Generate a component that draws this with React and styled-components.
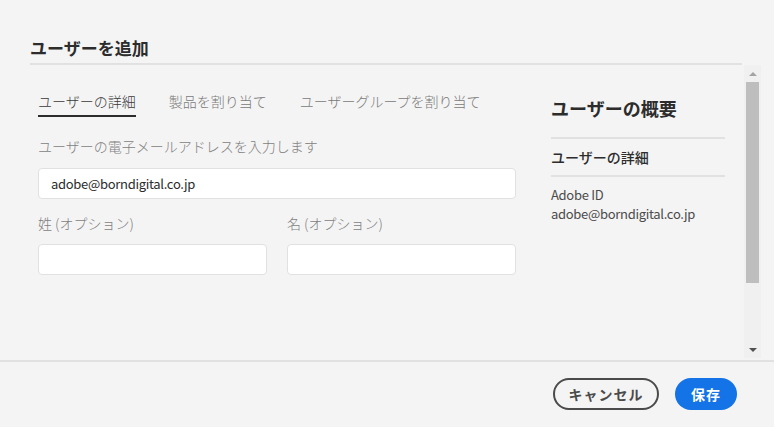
import React from "react";
import styled, { createGlobalStyle } from "styled-components";

const GlobalStyle = createGlobalStyle`
  body {
    margin: 0;
    background: #f4f4f4;
    font-family: "Noto Sans CJK JP", "Noto Sans", sans-serif;
  }
`;

const Page = styled.div`
  width: 774px;
  height: 427px;
  display: flex;
  flex-direction: column;
  background: #f4f4f4;
  overflow: hidden;
`;

const Header = styled.div`
  padding: 36px 32px 0 30px;
`;

const Title = styled.h1`
  margin: 0;
  padding-bottom: 3px;
  font-size: 17px;
  line-height: 24px;
  font-weight: 700;
  color: #2c2c2c;
  border-bottom: 2px solid #e1e1e1;
`;

const Body = styled.div`
  display: flex;
  height: 295px;
`;

const Content = styled.div`
  flex: 1;
  display: flex;
  gap: 35px;
  padding-left: 38px;
`;

const Main = styled.div`
  width: 478px;
  display: flex;
  flex-direction: column;
`;

const Tabs = styled.div`
  display: flex;
  gap: 33px;
  padding-top: 27px;
`;

const Tab = styled.div`
  font-size: 14px;
  line-height: 18px;
  font-weight: 300;
  padding-bottom: 5px;
  color: ${(props) => (props.$active ? "#3a3a3a" : "#7a7a7a")};
  border-bottom: 2px solid
    ${(props) => (props.$active ? "#2c2c2c" : "transparent")};
`;

const Label = styled.div`
  font-size: 14px;
  line-height: 18px;
  font-weight: 300;
  color: #7e7e7e;
  margin-top: ${(props) => props.$top}px;
  margin-bottom: ${(props) => props.$bottom}px;
`;

const Input = styled.div`
  box-sizing: border-box;
  height: 31px;
  background: #fff;
  border: 1px solid #e1e1e1;
  border-radius: 4px;
  padding-left: 12px;
  font-size: 13px;
  letter-spacing: -0.3px;
  line-height: 29px;
  color: #2c2c2c;
`;

const Row = styled.div`
  display: grid;
  grid-template-columns: 1fr 1fr;
  column-gap: 20px;
`;

const Field = styled.div`
  display: flex;
  flex-direction: column;
`;

const Side = styled.div`
  width: 174px;
  display: flex;
  flex-direction: column;
  padding-top: 31px;
`;

const SideTitle = styled.div`
  font-size: 18px;
  line-height: 24px;
  font-weight: 700;
  color: #2c2c2c;
  padding-bottom: 17px;
  border-bottom: 2px solid #e1e1e1;
`;

const SideSection = styled.div`
  font-size: 14px;
  line-height: 18px;
  font-weight: 500;
  color: #2c2c2c;
  padding: 9px 0;
  border-bottom: 2px solid #e1e1e1;
`;

const SideInfo = styled.div`
  padding-top: 8px;
  font-size: 13px;
  letter-spacing: -0.3px;
  line-height: 19px;
  color: #4b4b4b;
`;

const Scrollbar = styled.div`
  width: 17px;
  height: 293px;
  margin-right: 13px;
  background: #f0f0f0;
  display: flex;
  flex-direction: column;
`;

const Arrow = styled.div`
  height: 17px;
  display: flex;
  align-items: center;
  justify-content: center;

  &::before {
    content: "";
    border-left: 4px solid transparent;
    border-right: 4px solid transparent;
    ${(props) =>
      props.$down
        ? "border-top: 4px solid #505050;"
        : "border-bottom: 4px solid #a3a3a3;"}
  }
`;

const Thumb = styled.div`
  height: 201px;
  margin: 0 2px;
  background: #bebebe;
`;

const Spacer = styled.div`
  flex: 1;
`;

const Footer = styled.div`
  flex: 1;
  border-top: 2px solid #e1e1e1;
  display: flex;
  justify-content: flex-end;
  align-items: flex-start;
  gap: 16px;
  padding: 16px 37px 0 0;
`;

const Button = styled.button`
  box-sizing: border-box;
  height: 32px;
  border-radius: 16px;
  font-family: inherit;
  font-size: 14px;
  font-weight: 700;
  letter-spacing: 1px;
  padding: 0;
  cursor: pointer;
`;

const CancelButton = styled(Button)`
  width: 106px;
  background: transparent;
  border: 2px solid #4b4b4b;
  color: #4b4b4b;
`;

const SaveButton = styled(Button)`
  width: 62px;
  background: #1473e6;
  border: none;
  color: #fff;
`;

export default function App() {
  return (
    <Page>
      <GlobalStyle />
      <Header>
        <Title>ユーザーを追加</Title>
      </Header>
      <Body>
        <Content>
          <Main>
            <Tabs>
              <Tab $active>ユーザーの詳細</Tab>
              <Tab>製品を割り当て</Tab>
              <Tab>ユーザーグループを割り当て</Tab>
            </Tabs>
            <Label $top={20} $bottom={13}>
              ユーザーの電子メールアドレスを入力します
            </Label>
            <Input>adobe@borndigital.co.jp</Input>
            <Row>
              <Field>
                <Label $top={15} $bottom={12}>
                  姓 (オプション)
                </Label>
                <Input />
              </Field>
              <Field>
                <Label $top={15} $bottom={12}>
                  名 (オプション)
                </Label>
                <Input />
              </Field>
            </Row>
          </Main>
          <Side>
            <SideTitle>ユーザーの概要</SideTitle>
            <SideSection>ユーザーの詳細</SideSection>
            <SideInfo>
              Adobe ID
              <br />
              adobe@borndigital.co.jp
            </SideInfo>
          </Side>
        </Content>
        <Scrollbar>
          <Arrow />
          <Thumb />
          <Spacer />
          <Arrow $down />
        </Scrollbar>
      </Body>
      <Footer>
        <CancelButton>キャンセル</CancelButton>
        <SaveButton>保存</SaveButton>
      </Footer>
    </Page>
  );
}
